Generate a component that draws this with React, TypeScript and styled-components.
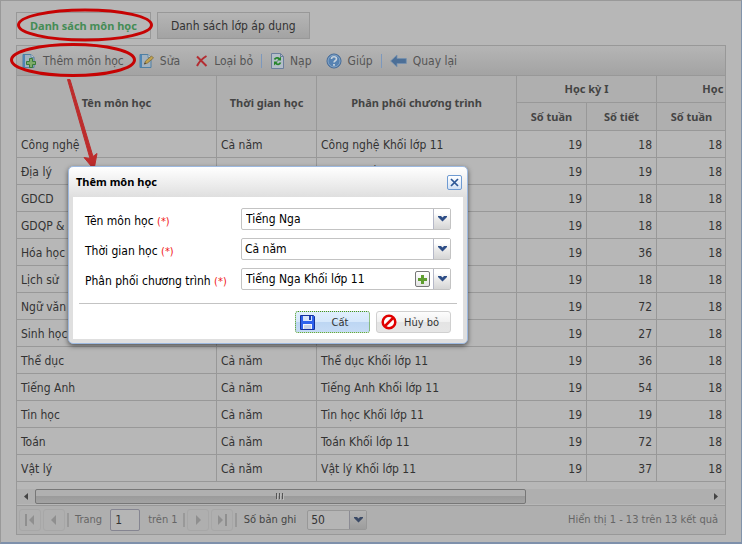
import React, { useState } from 'react';
import styled, { createGlobalStyle, css } from 'styled-components';

const GlobalStyle = createGlobalStyle`
  *, *::before, *::after { box-sizing: border-box; }
  body {
    margin: 0;
    background: #b7b7b7;
    color: #333;
    font: 12px/16px "DejaVu Sans Condensed", "Noto Sans", sans-serif;
  }
  button, input, select { font: inherit; color: inherit; margin: 0; }
  button { cursor: pointer; white-space: nowrap; }
`;

const LINE = '#989898';

const Page = styled.main`
  position: relative;
  padding: 11px 15px 7px;
  border: 1px solid #999;
  border-right-color: #8193aa;
  border-bottom: 2px solid #7e90ab;
`;

const TabList = styled.div`
  display: flex;
  gap: 6px;
  margin-bottom: 6px;
`;

const Tab = styled.button<{ $active?: boolean }>`
  height: 27px;
  padding: 0 13px;
  border: 1px solid ${LINE};
  background: linear-gradient(#b5b5b5, #a3a3a3);
  ${({ $active }) =>
    $active &&
    css`
      background: #b7b7b7;
      color: #458c55;
      font-family: "Noto Sans", sans-serif;
      font-weight: 700;
      font-size: 11px;
    `}
`;

const Panel = styled.section`
  border: 1px solid ${LINE};
`;

const Toolbar = styled.div`
  display: flex;
  align-items: center;
  gap: 14px;
  height: 30px;
  padding-left: 4px;
  border-bottom: 1px solid ${LINE};
  background: linear-gradient(#b5b5b5, #a3a3a3);
`;

const ToolButton = styled.button`
  display: flex;
  align-items: center;
  gap: 6px;
  padding: 0;
  border: 0;
  background: none;
  color: #555;
`;

const ToolDivider = styled.span`
  width: 1px;
  height: 14px;
  margin: 0 -6px;
  background: #7c98bd;
`;

const TableViewport = styled.div`
  overflow: hidden;
  padding-bottom: 7px;
`;

const Table = styled.table`
  table-layout: fixed;
  width: 780px;
  border-collapse: separate;
  border-spacing: 0;
`;

const Col = styled.col<{ $width: number }>`
  width: ${({ $width }) => $width}px;
`;

const HeadRow = styled.tr<{ $sub?: boolean }>`
  height: ${({ $sub }) => ($sub ? 28 : 27)}px;
`;

const Head = styled.th`
  padding: 0;
  border-right: 1px solid ${LINE};
  border-bottom: 1px solid ${LINE};
  background: #afafaf;
  color: #444;
  font: 700 11px/16px "Noto Sans", sans-serif;
`;

const Cell = styled.td<{ $number?: boolean }>`
  height: 27px;
  padding: 2px 4px 0;
  border-right: 1px solid ${LINE};
  border-bottom: 1px solid ${LINE};
  text-align: ${({ $number }) => ($number ? 'right' : 'left')};
  white-space: nowrap;
`;

const ScrollBar = styled.div`
  display: flex;
  align-items: center;
  height: 15px;
  margin-bottom: 1px;
  background: #afafaf;
`;

const ScrollButton = styled.button`
  display: grid;
  place-items: center;
  width: 18px;
  height: 15px;
  padding: 0;
  border: 0;
  background: none;
`;

const ScrollTrack = styled.div`
  flex: 1;
  display: flex;
`;

const ScrollThumb = styled.div`
  display: grid;
  place-items: center;
  width: 73%;
  height: 15px;
  border: 1px solid #777;
  border-radius: 2px;
  background: linear-gradient(#b0b0b0 45%, #9b9b9b 50%, #a3a3a3);
`;

const Pager = styled.nav`
  display: flex;
  align-items: center;
  height: 29px;
  padding: 0 7px 0 2px;
  border-top: 1px solid ${LINE};
  background: #afafaf;
  color: #666;
`;

const PagerButton = styled.button`
  display: grid;
  place-items: center;
  width: 22px;
  height: 22px;
  margin-right: 2px;
  padding: 0;
  border: 1px solid #a7a7a7;
  border-radius: 3px;
  background: none;
`;

const PagerDivider = styled.span`
  width: 2px;
  height: 14px;
  margin: 0 2px 0 0;
  background: #999;
`;

const PagerText = styled.label`
  margin: 0 8px 0 4px;
  font-size: 11px;
  white-space: nowrap;
`;

const PageTotal = styled.span`
  margin: 0 5px 0 8px;
  font-size: 11px;
  white-space: nowrap;
`;

const SizeText = styled(PagerText)`
  margin: 0 11px 0 5px;
  color: #444;
`;

const PageInput = styled.input`
  width: 30px;
  height: 22px;
  padding: 0 4px;
  border: 1px solid #858591;
  border-radius: 2px;
  background: #b5b5b5;
  color: #333;
`;

const PagerStatus = styled.span`
  margin-left: auto;
  font-size: 11px;
`;

const Combo = styled.div<{ $dim?: boolean }>`
  position: relative;
  display: flex;
  width: ${({ $dim }) => ($dim ? 60 : 210)}px;
  height: ${({ $dim }) => ($dim ? 20 : 22)}px;
  border: 1px solid ${({ $dim }) => ($dim ? '#989898' : '#c3c3c3')};
  border-radius: 2px;
  background: ${({ $dim }) => ($dim ? '#b5b5b5' : '#fff')};
  color: ${({ $dim }) => ($dim ? '#333' : '#000')};
`;

const ComboInput = styled.input`
  flex: 1;
  min-width: 0;
  padding: 0 4px;
  border: 0;
  outline: 0;
  background: none;
`;

const ComboSelect = styled.select`
  appearance: none;
  width: 100%;
  padding: 0 3px;
  border: 0;
  outline: 0;
  background: none;
`;

const triggerLook = css<{ $dim?: boolean }>`
  display: grid;
  place-items: center;
  width: 17px;
  height: 100%;
  padding: 0;
  border: 0;
  border-left: 1px solid ${({ $dim }) => ($dim ? '#8b8b94' : '#b5b8c8')};
  background: ${({ $dim }) =>
    $dim ? 'linear-gradient(#b3b3b3, #9d9d9d)' : 'linear-gradient(#fff 20%, #ececec 50%, #d5d5d5)'};
`;

const Trigger = styled.button`
  ${triggerLook}
`;

const SelectArrow = styled.span<{ $dim?: boolean }>`
  ${triggerLook}
  position: absolute;
  top: 0;
  right: 0;
  pointer-events: none;
`;

const AddButton = styled.button`
  display: grid;
  place-items: center;
  align-self: center;
  width: 15px;
  height: 16px;
  margin-right: 3px;
  padding: 0;
  border: 1px solid #777;
  border-radius: 2px;
  background: linear-gradient(#fff, #e4e4e4);
`;

const Dialog = styled.section`
  position: absolute;
  top: 165px;
  left: 67px;
  width: 400px;
  padding: 0 4px 4px;
  border: 1px solid #9db9e0;
  border-radius: 5px;
  background: #dfdfdf linear-gradient(#fff, #dfdfdf 30px) no-repeat;
  box-shadow: 0 2px 5px rgba(0, 0, 0, 0.55);
  color: #000;
`;

const DialogHeader = styled.header`
  display: flex;
  align-items: center;
  justify-content: space-between;
  height: 30px;
  padding: 0 1px 0 3px;
`;

const DialogTitle = styled.h2`
  margin: 0;
  font: 700 11px/16px "Noto Sans", sans-serif;
`;

const CloseButton = styled.button`
  display: grid;
  place-items: center;
  width: 15px;
  height: 15px;
  padding: 0;
  border: 1px solid #6f9bd2;
  border-radius: 2px;
  background: linear-gradient(#fff, #d3e2f5);
`;

const DialogForm = styled.form`
  padding: 11px 6px 6px;
  background: #fff;
`;

const Field = styled.div`
  display: flex;
  align-items: center;
  justify-content: space-between;
  margin-bottom: 8px;
  padding: 0 6px;
`;

const FieldLabel = styled.label`
  padding-top: 4px;
  white-space: nowrap;
`;

const Required = styled.span`
  color: #f01818;
  font-size: 11px;
`;

const DialogFooter = styled.footer`
  display: flex;
  justify-content: flex-end;
  gap: 6px;
  margin-top: 13px;
  padding: 7px 6px 0;
  border-top: 1px solid #c3c3c3;
`;

const ActionButton = styled.button<{ $primary?: boolean }>`
  display: flex;
  align-items: center;
  width: 75px;
  height: 22px;
  padding: 0 4px;
  border: 1px solid #d0d0d0;
  border-radius: 3px;
  background: linear-gradient(#fdfdfd, #f1f1f1 48%, #e4e4e4 52%, #e6e6e6);
  font-size: 11px;
  color: #333;
  ${({ $primary }) =>
    $primary &&
    css`
      border: 1px dotted #4a9a10;
      background: linear-gradient(#e0effd, #d6e8fb 48%, #bdd6f3 52%, #c6dcf5);
    `}
`;

const ActionText = styled.span`
  flex: 1;
  padding-top: 2px;
  text-align: center;
`;

const Marks = styled.svg`
  position: absolute;
  top: -1px;
  left: -1px;
  pointer-events: none;
`;

const SheetBase = () => (
  <>
    <path d="M2 1.5h8l3 3v10H2z" fill="#a3b2bf" stroke="#4e7fa3" />
    <path d="M3 2v12" stroke="#4e86b5" strokeWidth="2" />
    <path d="M10 1.5v3h3" fill="#c2cad0" stroke="#668aa5" />
  </>
);

const AddIcon = () => (
  <svg width="16" height="16" viewBox="0 0 16 16" aria-hidden="true">
    <SheetBase />
    <path d="M8.5 5.5h3v3h3v3h-3v3h-3v-3h-3v-3h3z" fill="#7eab68" stroke="#397a38" />
  </svg>
);

const EditIcon = () => (
  <svg width="16" height="16" viewBox="0 0 16 16" aria-hidden="true">
    <SheetBase />
    <path d="M6.500 11l1-3 6-5 2 2-6 5z" fill="#c1a34f" stroke="#806b3b" strokeWidth=".8" />
    <path d="M6 11.500l2-1-1-1z" fill="#333" />
  </svg>
);

const RemoveIcon = () => (
  <svg width="14" height="14" viewBox="0 0 14 14" aria-hidden="true">
    <path d="M3 2.500L12.500 12M12.500 2C9 4 5 8 3 12" fill="none" stroke="#b32d32" strokeWidth="2" />
  </svg>
);

const ReloadIcon = () => (
  <svg width="14" height="16" viewBox="0 0 14 16" aria-hidden="true">
    <path d="M1.500 .5h9l3 3v12h-12z" fill="#b4bec9" stroke="#6c7f9d" />
    <path d="M10.500 .5v3h3" fill="none" stroke="#6c7f9d" />
    <path d="M4.500 6.500C5.500 4.500 8 4.300 9.500 6M10.500 9.500C9.500 11.800 7 12 5.500 10" fill="none" stroke="#26852b" strokeWidth="1.800" />
    <path d="M11 3.500v4H7zM4 12.500v-4h4z" fill="#26852b" />
  </svg>
);

const HelpIcon = () => (
  <svg width="16" height="16" viewBox="0 0 16 16" aria-hidden="true">
    <circle cx="8" cy="8" r="7" fill="#5682b2" stroke="#3e6594" />
    <circle cx="8" cy="8" r="6" fill="none" stroke="#86a5c5" />
    <path d="M5.500 6C5.500 3 10.500 3 10.500 6c0 1.700-2.500 1.800-2.500 3.500" fill="none" stroke="#c9d3dc" strokeWidth="1.600" />
    <path d="M8 11v1.800" stroke="#c9d3dc" strokeWidth="1.800" />
  </svg>
);

const BackIcon = () => (
  <svg width="17" height="14" viewBox="0 0 17 14" aria-hidden="true">
    <path d="M.7 7L7 1v3.500h9.300v5H7V13z" fill="#4c6f97" stroke="#7590ae" strokeWidth=".8" />
  </svg>
);

const Chevron = ({ dim = false }) => (
  <svg width="9" height="6" viewBox="0 0 9 6" aria-hidden="true">
    <path d="M0 0h3l1.500 1.500L6 0h3v1L4.500 5.500 0 1z" fill={dim ? '#3b4a66' : '#2c4d86'} />
  </svg>
);

const PlusIcon = () => (
  <svg width="11" height="11" viewBox="0 0 11 11" aria-hidden="true">
    <path d="M4 1h3v3h3v3H7v3H4V7H1V4h3z" fill="#5f9e30" />
  </svg>
);

const CloseIcon = () => (
  <svg width="9" height="9" viewBox="0 0 9 9" aria-hidden="true">
    <path d="M1 1l7 7M8 1L1 8" stroke="#2c5796" strokeWidth="1.700" />
  </svg>
);

const SaveIcon = () => (
  <svg width="15" height="15" viewBox="0 0 15 15" aria-hidden="true">
    <path d="M.5 .5h13l1 1v13H.5z" fill="#2d62ed" stroke="#14309c" />
    <path d="M3 1h9v5H3z" fill="#d8e4fb" />
    <path d="M9 1h2v4H9z" fill="#1c3fae" />
    <path d="M3 9h9v5H3z" fill="#f2f5fb" />
    <path d="M4 11h7M4 13h7" stroke="#9db0d8" />
  </svg>
);

const CancelIcon = () => (
  <svg width="16" height="16" viewBox="0 0 16 16" aria-hidden="true">
    <circle cx="8" cy="8" r="6.300" fill="#fff" stroke="#e00000" strokeWidth="2.500" />
    <path d="M3.500 12.500l9-9" stroke="#e00000" strokeWidth="2.500" />
  </svg>
);

const PageArrow = ({ flip = false, bar = false }) => (
  <svg width="12" height="12" viewBox="0 0 12 12" aria-hidden="true">
    <g transform={flip ? 'matrix(-1 0 0 1 12 0)' : undefined} fill="#8f8f8f">
      {bar && <path d="M1 0h2v12H1z" />}
      <path d={bar ? 'M10 1v10L5 6z' : 'M8 1v10L3 6z'} />
    </g>
  </svg>
);

const ScrollArrow = ({ flip = false }) => (
  <svg width="4" height="7" viewBox="0 0 4 7" aria-hidden="true">
    <path d={flip ? 'M0 0l4 3.500L0 7z' : 'M4 0L0 3.500 4 7z'} fill="#444" />
  </svg>
);

const Grip = () => (
  <svg width="9" height="7" viewBox="0 0 9 7" aria-hidden="true">
    <path d="M.5 0v6M3.500 0v6M6.500 0v6" stroke="#555" />
    <path d="M1.500 1v6M4.500 1v6M7.500 1v6" stroke="#bbb" />
  </svg>
);

const subjects: [string, number, number, number][] = [
  ['Công nghệ', 19, 18, 18],
  ['Địa lý', 19, 19, 18],
  ['GDCD', 19, 18, 18],
  ['GDQP & AN', 19, 18, 18],
  ['Hóa học', 19, 36, 18],
  ['Lịch sử', 19, 18, 18],
  ['Ngữ văn', 19, 72, 18],
  ['Sinh học', 19, 27, 18],
  ['Thể dục', 19, 36, 18],
  ['Tiếng Anh', 19, 54, 18],
  ['Tin học', 19, 19, 18],
  ['Toán', 19, 72, 18],
  ['Vật lý', 19, 37, 18],
];

const columnWidths = [200, 100, 200, 70, 70, 70, 70];

function SubjectTable() {
  return (
    <TableViewport>
      <Table>
        <colgroup>
          {columnWidths.map((width, i) => (
            <Col key={i} $width={width} />
          ))}
        </colgroup>
        <thead>
          <HeadRow>
            <Head rowSpan={2}>Tên môn học</Head>
            <Head rowSpan={2}>Thời gian học</Head>
            <Head rowSpan={2}>Phân phối chương trình</Head>
            <Head colSpan={2}>Học kỳ I</Head>
            <Head colSpan={2}>Học kỳ II</Head>
          </HeadRow>
          <HeadRow $sub>
            <Head>Số tuần</Head>
            <Head>Số tiết</Head>
            <Head>Số tuần</Head>
            <Head>Số tiết</Head>
          </HeadRow>
        </thead>
        <tbody>
          {subjects.map(([name, weeks, periods, weeks2]) => (
            <tr key={name}>
              <Cell>{name}</Cell>
              <Cell>Cả năm</Cell>
              <Cell>{name} Khối lớp 11</Cell>
              <Cell $number>{weeks}</Cell>
              <Cell $number>{periods}</Cell>
              <Cell $number>{weeks2}</Cell>
              <Cell $number />
            </tr>
          ))}
        </tbody>
      </Table>
    </TableViewport>
  );
}

function AddSubjectDialog() {
  const [name, setName] = useState('Tiếng Nga');
  const [plan, setPlan] = useState('Tiếng Nga Khối lớp 11');
  return (
    <Dialog role="dialog" aria-labelledby="dialog-title">
      <DialogHeader>
        <DialogTitle id="dialog-title">Thêm môn học</DialogTitle>
        <CloseButton type="button" aria-label="Đóng">
          <CloseIcon />
        </CloseButton>
      </DialogHeader>
      <DialogForm onSubmit={(e) => e.preventDefault()}>
        <Field>
          <FieldLabel htmlFor="subject">
            Tên môn học <Required>(*)</Required>
          </FieldLabel>
          <Combo>
            <ComboInput id="subject" value={name} onChange={(e) => setName(e.target.value)} />
            <Trigger type="button" aria-label="Chọn môn học">
              <Chevron />
            </Trigger>
          </Combo>
        </Field>
        <Field>
          <FieldLabel htmlFor="period">
            Thời gian học <Required>(*)</Required>
          </FieldLabel>
          <Combo>
            <ComboSelect id="period">
              <option>Cả năm</option>
            </ComboSelect>
            <SelectArrow>
              <Chevron />
            </SelectArrow>
          </Combo>
        </Field>
        <Field>
          <FieldLabel htmlFor="plan">
            Phân phối chương trình <Required>(*)</Required>
          </FieldLabel>
          <Combo>
            <ComboInput id="plan" value={plan} onChange={(e) => setPlan(e.target.value)} />
            <AddButton type="button" aria-label="Thêm phân phối chương trình">
              <PlusIcon />
            </AddButton>
            <Trigger type="button" aria-label="Chọn phân phối chương trình">
              <Chevron />
            </Trigger>
          </Combo>
        </Field>
        <DialogFooter>
          <ActionButton type="submit" $primary>
            <SaveIcon />
            <ActionText>Cất</ActionText>
          </ActionButton>
          <ActionButton type="button">
            <CancelIcon />
            <ActionText>Hủy bỏ</ActionText>
          </ActionButton>
        </DialogFooter>
      </DialogForm>
    </Dialog>
  );
}

export default function App() {
  const [page, setPage] = useState('1');
  return (
    <>
      <GlobalStyle />
      <Page>
        <TabList role="tablist">
          <Tab role="tab" aria-selected="true" $active>
            Danh sách môn học
          </Tab>
          <Tab role="tab" aria-selected="false">
            Danh sách lớp áp dụng
          </Tab>
        </TabList>
        <Panel>
          <Toolbar role="toolbar">
            <ToolButton><AddIcon />Thêm môn học</ToolButton>
            <ToolButton><EditIcon />Sửa</ToolButton>
            <ToolButton><RemoveIcon />Loại bỏ</ToolButton>
            <ToolDivider />
            <ToolButton><ReloadIcon />Nạp</ToolButton>
            <ToolButton><HelpIcon />Giúp</ToolButton>
            <ToolDivider />
            <ToolButton><BackIcon />Quay lại</ToolButton>
          </Toolbar>
          <SubjectTable />
          <ScrollBar>
            <ScrollButton aria-label="Cuộn trái"><ScrollArrow /></ScrollButton>
            <ScrollTrack>
              <ScrollThumb><Grip /></ScrollThumb>
            </ScrollTrack>
            <ScrollButton aria-label="Cuộn phải"><ScrollArrow flip /></ScrollButton>
          </ScrollBar>
          <Pager>
            <PagerButton aria-label="Trang đầu"><PageArrow bar /></PagerButton>
            <PagerButton aria-label="Trang trước"><PageArrow /></PagerButton>
            <PagerDivider />
            <PagerText htmlFor="page">Trang</PagerText>
            <PageInput id="page" value={page} onChange={(e) => setPage(e.target.value)} />
            <PageTotal>trên 1</PageTotal>
            <PagerDivider />
            <PagerButton aria-label="Trang sau"><PageArrow flip /></PagerButton>
            <PagerButton aria-label="Trang cuối"><PageArrow flip bar /></PagerButton>
            <PagerDivider />
            <SizeText htmlFor="size">Số bản ghi</SizeText>
            <Combo $dim>
              <ComboSelect id="size">
                <option>50</option>
              </ComboSelect>
              <SelectArrow $dim>
                <Chevron dim />
              </SelectArrow>
            </Combo>
            <PagerStatus>Hiển thị 1 - 13 trên 13 kết quả</PagerStatus>
          </Pager>
        </Panel>
        <Marks width="180" height="172" viewBox="0 0 180 172" aria-hidden="true">
          <g fill="none" stroke="#c60303" strokeWidth="3">
            <ellipse cx="85" cy="25" rx="66.500" ry="15" />
            <ellipse cx="73" cy="60" rx="61.500" ry="15.500" />
          </g>
          <path d="M67.500 79.500l2.500 0 23 77 4-3-3 16-10-12 6 1z" fill="#bd2c2c" stroke="#bd2c2c" strokeLinejoin="round" />
        </Marks>
        <AddSubjectDialog />
      </Page>
    </>
  );
}
